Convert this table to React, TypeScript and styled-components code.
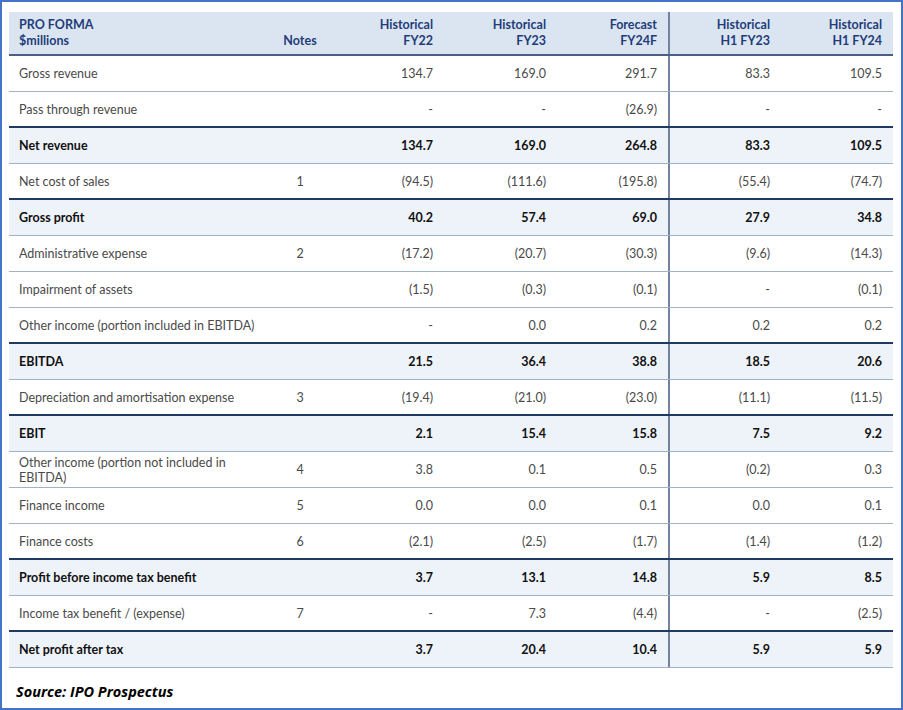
import React from 'react';
import styled, { createGlobalStyle } from 'styled-components';

const GlobalStyle = createGlobalStyle`
  html, body {
    margin: 0;
    padding: 0;
    background: #fff;
  }
  body {
    font-family: Lato, 'Noto Sans', sans-serif;
  }
`;

const COLS = '259px 64px 112px 113px 111px 113px 112px';

const Frame = styled.div`
  box-sizing: border-box;
  width: 903px;
  height: 710px;
  border: 2px solid #4472c4;
  padding: 10px 8px 0 7px;
`;

const Table = styled.div`
  width: 884px;
`;

const HeaderRow = styled.div`
  display: grid;
  grid-template-columns: ${COLS};
  height: 44px;
  box-sizing: border-box;
  background: #dbe5f1;
  border-bottom: 2px solid #4a5f86;
`;

const HeadCell = styled.div<{ $align: 'left' | 'center' | 'right'; $divider?: boolean }>`
  display: flex;
  flex-direction: column;
  justify-content: center;
  align-items: ${({ $align }) => ($align === 'left' ? 'flex-start' : $align === 'center' ? 'center' : 'flex-end')};
  text-align: ${({ $align }) => $align};
  padding: ${({ $align }) => ($align === 'left' ? '0 0 0 10px' : $align === 'right' ? '0 11px 0 0' : '0')};
  box-sizing: border-box;
  font-size: 12.5px;
  line-height: 16px;
  font-weight: 700;
  color: #1f3d7a;
  border-left: ${({ $divider }) => ($divider ? '2px solid #71839f' : 'none')};
`;

const NotesHead = styled(HeadCell)`
  justify-content: flex-end;
  padding-bottom: 5px;
`;

const Row = styled.div<{ $bold?: boolean; $thick?: boolean }>`
  display: grid;
  grid-template-columns: ${COLS};
  height: 36px;
  box-sizing: border-box;
  background: ${({ $bold }) => ($bold ? '#eef3fa' : '#fff')};
  border-bottom: ${({ $thick }) => ($thick ? '2.5px solid #1f3a62' : '1.5px solid #a3b1c6')};
  color: ${({ $bold }) => ($bold ? '#111' : '#4a4a4a')};
  font-weight: ${({ $bold }) => ($bold ? 700 : 400)};
  font-size: 12.5px;
`;

const Cell = styled.div<{ $align: 'left' | 'center' | 'right'; $divider?: boolean }>`
  display: flex;
  align-items: center;
  justify-content: ${({ $align }) => ($align === 'left' ? 'flex-start' : $align === 'center' ? 'center' : 'flex-end')};
  text-align: ${({ $align }) => $align};
  padding: ${({ $align }) => ($align === 'left' ? '0 8px 0 10px' : $align === 'right' ? '0 11px 0 0' : '0')};
  box-sizing: border-box;
  line-height: 15px;
  border-left: ${({ $divider }) => ($divider ? '2px solid #71839f' : 'none')};
`;

const Source = styled.div`
  margin: 14px 0 0 7px;
  font-family: 'Open Sans', Lato, sans-serif;
  font-size: 14.5px;
  font-weight: 700;
  font-style: italic;
  color: #000;
`;

interface Line {
  label: string;
  note?: string;
  values: string[];
  bold?: boolean;
}

const lines: Line[] = [
  { label: 'Gross revenue', values: ['134.7', '169.0', '291.7', '83.3', '109.5'] },
  { label: 'Pass through revenue', values: ['-', '-', '(26.9)', '-', '-'] },
  { label: 'Net revenue', values: ['134.7', '169.0', '264.8', '83.3', '109.5'], bold: true },
  { label: 'Net cost of sales', note: '1', values: ['(94.5)', '(111.6)', '(195.8)', '(55.4)', '(74.7)'] },
  { label: 'Gross profit', values: ['40.2', '57.4', '69.0', '27.9', '34.8'], bold: true },
  { label: 'Administrative expense', note: '2', values: ['(17.2)', '(20.7)', '(30.3)', '(9.6)', '(14.3)'] },
  { label: 'Impairment of assets', values: ['(1.5)', '(0.3)', '(0.1)', '-', '(0.1)'] },
  { label: 'Other income (portion included in EBITDA)', values: ['-', '0.0', '0.2', '0.2', '0.2'] },
  { label: 'EBITDA', values: ['21.5', '36.4', '38.8', '18.5', '20.6'], bold: true },
  { label: 'Depreciation and amortisation expense', note: '3', values: ['(19.4)', '(21.0)', '(23.0)', '(11.1)', '(11.5)'] },
  { label: 'EBIT', values: ['2.1', '15.4', '15.8', '7.5', '9.2'], bold: true },
  { label: 'Other income (portion not included in EBITDA)', note: '4', values: ['3.8', '0.1', '0.5', '(0.2)', '0.3'] },
  { label: 'Finance income', note: '5', values: ['0.0', '0.0', '0.1', '0.0', '0.1'] },
  { label: 'Finance costs', note: '6', values: ['(2.1)', '(2.5)', '(1.7)', '(1.4)', '(1.2)'] },
  { label: 'Profit before income tax benefit', values: ['3.7', '13.1', '14.8', '5.9', '8.5'], bold: true },
  { label: 'Income tax benefit / (expense)', note: '7', values: ['-', '7.3', '(4.4)', '-', '(2.5)'] },
  { label: 'Net profit after tax', values: ['3.7', '20.4', '10.4', '5.9', '5.9'], bold: true },
];

const heads: [string, string][] = [
  ['Historical', 'FY22'],
  ['Historical', 'FY23'],
  ['Forecast', 'FY24F'],
  ['Historical', 'H1 FY23'],
  ['Historical', 'H1 FY24'],
];

const App = () => (
  <>
    <GlobalStyle />
    <Frame>
      <Table>
        <HeaderRow>
          <HeadCell $align="left">
            <span>PRO FORMA</span>
            <span>$millions</span>
          </HeadCell>
          <NotesHead $align="center">Notes</NotesHead>
          {heads.map(([a, b], i) => (
            <HeadCell $align="right" $divider={i === 3} key={a + b}>
              <span>{a}</span>
              <span>{b}</span>
            </HeadCell>
          ))}
        </HeaderRow>
        {lines.map((line, idx) => (
          <Row key={line.label} $bold={line.bold} $thick={!!lines[idx + 1]?.bold}>
            <Cell $align="left">{line.label}</Cell>
            <Cell $align="center">{line.note ?? ''}</Cell>
            {line.values.map((v, i) => (
              <Cell $align="right" $divider={i === 3} key={i}>{v}</Cell>
            ))}
          </Row>
        ))}
      </Table>
      <Source>Source: IPO Prospectus</Source>
    </Frame>
  </>
);

export default App;
